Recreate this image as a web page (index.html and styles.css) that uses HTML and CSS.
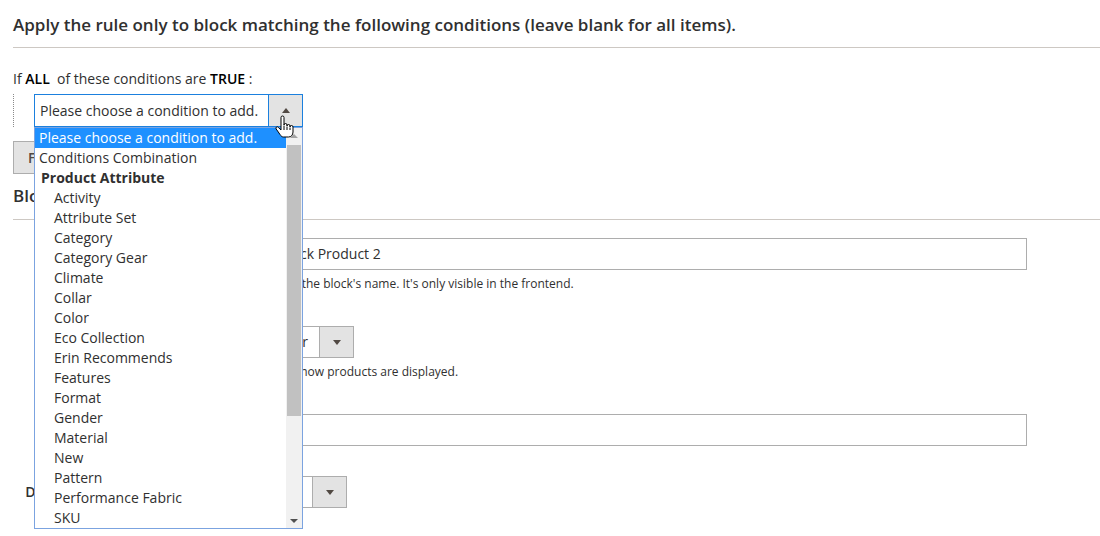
FILE: index.html
```html
<!DOCTYPE html>
<html lang="en">
<head>
<meta charset="utf-8">
<title>Conditions</title>
<link rel="stylesheet" href="styles.css">
</head>
<body>
<div class="page">
  <h3 class="section-title">Apply the rule only to block matching the following conditions (leave blank for all items).</h3>
  <p class="cond-head">If <b>ALL</b>&nbsp; of these conditions are <b>TRUE</b> :</p>
  <div class="rule-tree">
    <div class="fake-select">
      <span class="fs-value">Please choose a condition to add.</span>
      <span class="fs-btn"><span class="tri up"></span></span>
      <div class="listbox">
        <div class="opts">
          <div class="opt sel">Please choose a condition to add.</div>
          <div class="opt">Conditions Combination</div>
          <div class="grp">Product Attribute</div>
          <div class="opt sub">Activity</div>
          <div class="opt sub">Attribute Set</div>
          <div class="opt sub">Category</div>
          <div class="opt sub">Category Gear</div>
          <div class="opt sub">Climate</div>
          <div class="opt sub">Collar</div>
          <div class="opt sub">Color</div>
          <div class="opt sub">Eco Collection</div>
          <div class="opt sub">Erin Recommends</div>
          <div class="opt sub">Features</div>
          <div class="opt sub">Format</div>
          <div class="opt sub">Gender</div>
          <div class="opt sub">Material</div>
          <div class="opt sub">New</div>
          <div class="opt sub">Pattern</div>
          <div class="opt sub">Performance Fabric</div>
          <div class="opt sub">SKU</div>
        </div>
        <div class="sbar">
          <span class="arr arr-up"></span>
          <span class="track"><span class="thumb"></span></span>
          <span class="arr arr-down"></span>
        </div>
      </div>
      <svg class="cursor" viewBox="0 0 19 23" width="19" height="23" aria-hidden="true">
        <path d="M6 2.5a1.5 1.5 0 0 1 3 0V10a1.5 1.5 0 0 1 3 0v1a1.5 1.5 0 0 1 3 0v1a1.5 1.5 0 0 1 3 0v5c0 3-2 5-4.5 5H8.5c-1.5 0-2.5-1-3.5-2.5L1.2 14a1.3 1.3 0 0 1 2-1.7L6 15Z" fill="#fff" stroke="#000" stroke-width="1" stroke-linejoin="round"/>
        <path d="M9 10.5V15M12 11.5V15M15 12.5V15" stroke="#000" stroke-width="1" fill="none"/>
      </svg>
    </div>
  </div>
  <button class="btn" type="button">Find Products</button>
  <h3 class="section-title second">Block Settings</h3>
  <div class="fields">
    <div class="field">
      <label class="label">Block Name</label>
      <div class="control">
        <div class="input">Block Product 2</div>
        <div class="note">This is the block's name. It's only visible in the frontend.</div>
      </div>
    </div>
    <div class="field">
      <label class="label">Display Mode</label>
      <div class="control">
        <div class="select w90"><span class="sel-val">Slider</span><span class="sel-btn"><span class="tri down"></span></span></div>
        <div class="note">Select how products are displayed.</div>
      </div>
    </div>
    <div class="field">
      <label class="label">Block Title</label>
      <div class="control">
        <div class="input"></div>
      </div>
    </div>
    <div class="field">
      <label class="label">Display the Add to Cart Button</label>
      <div class="control">
        <div class="select w83"><span class="sel-val">Yes</span><span class="sel-btn"><span class="tri down"></span></span></div>
      </div>
    </div>
  </div>
</div>
</body>
</html>
```

FILE: styles.css
```css
html, body {
  margin: 0;
  padding: 0;
  background: #ffffff;
}

body {
  font-family: "Open Sans", "DejaVu Sans", sans-serif;
  color: #303030;
  overflow: hidden;
}

.page {
  padding-left: 13px;
}

.section-title {
  margin: 0;
  padding: 13px 0 10px;
  font-size: 17px;
  line-height: 24px;
  font-weight: 600;
  color: #303030;
  border-bottom: 1px solid #cdc8c3;
}

.section-title.second {
  padding: 10px 0 11px;
}

.cond-head {
  margin: 22px 0 0;
  font-size: 14px;
  line-height: 18px;
}

.cond-head b {
  font-weight: 600;
  color: #000;
}

.rule-tree {
  margin-top: 6px;
  padding-left: 20px;
  border-left: 1px dotted #8a8a8a;
}

.fake-select {
  position: relative;
  display: flex;
  width: 269px;
  height: 33px;
  box-sizing: border-box;
  border: 1px solid #1b80de;
  background: #fff;
}

.fs-value {
  flex: 1;
  padding-left: 5px;
  font-size: 14px;
  line-height: 31px;
  white-space: nowrap;
  color: #303030;
}

.fs-btn {
  width: 34px;
  box-sizing: border-box;
  border-left: 1px solid #1b80de;
  background: #e3e3e3;
  display: flex;
  align-items: center;
  justify-content: center;
}

.tri {
  width: 0;
  height: 0;
  border-left: 4px solid transparent;
  border-right: 4px solid transparent;
}

.tri.up {
  border-bottom: 5px solid #514943;
}

.tri.down {
  border-top: 5px solid #514943;
}

.listbox {
  position: absolute;
  left: -1px;
  top: calc(100% + 1px);
  width: 269px;
  box-sizing: border-box;
  border: 1px solid #7ba3e0;
  background: #fff;
  display: flex;
  z-index: 10;
}

.opts {
  flex: 1;
}

.opt {
  height: 20px;
  line-height: 20px;
  font-size: 14px;
  padding-left: 4px;
  white-space: nowrap;
  color: #303030;
}

.opt.sel {
  background: #1e90ff;
  color: #fff;
}

.opt.sub {
  padding-left: 19px;
}

.grp {
  height: 20px;
  line-height: 20px;
  font-size: 14px;
  font-weight: 700;
  padding-left: 6px;
  color: #303030;
}

.sbar {
  width: 16px;
  background: #f1f1f1;
  display: flex;
  flex-direction: column;
}

.arr {
  height: 15px;
  display: flex;
  align-items: center;
  justify-content: center;
}

.arr::before {
  content: "";
  width: 0;
  height: 0;
  border-left: 4px solid transparent;
  border-right: 4px solid transparent;
}

.arr-up::before {
  border-bottom: 4px solid #a3a3a3;
}

.arr-down::before {
  border-top: 4px solid #505050;
}

.track {
  flex: 1;
}

.thumb {
  display: block;
  height: 271px;
  margin: 2px 1px 0 1px;
  background: #c1c1c1;
}

.cursor {
  position: absolute;
  left: 240px;
  top: 20px;
  z-index: 20;
}

.btn {
  display: block;
  margin-top: 14px;
  height: 33px;
  padding: 0 14px;
  background: #e3e3e3;
  border: 1px solid #adadad;
  font-family: "Open Sans", sans-serif;
  font-size: 14px;
  font-weight: 600;
  line-height: 31px;
  color: #514943;
}

.fields {
  margin-top: 18px;
}

.field {
  display: grid;
  grid-template-columns: 251px 763px;
  margin-bottom: 30px;
}

.label {
  text-align: right;
  padding-right: 33px;
  font-size: 14px;
  font-weight: 600;
  line-height: 32px;
  white-space: nowrap;
  color: #303030;
}

.input {
  height: 32px;
  box-sizing: border-box;
  border: 1px solid #adadad;
  padding: 0 10px 0 14px;
  font-size: 14px;
  line-height: 30px;
  color: #303030;
}

.note {
  margin: 5px 0 3px;
  font-size: 12px;
  line-height: 18px;
  color: #303030;
}

.select {
  display: flex;
  height: 32px;
  box-sizing: border-box;
  border: 1px solid #adadad;
  background: #fff;
}

.select.w90 {
  width: 90px;
}

.select.w83 {
  width: 83px;
}

.sel-val {
  flex: 1;
  padding-left: 6px;
  font-size: 14px;
  line-height: 30px;
  white-space: nowrap;
  overflow: hidden;
}

.sel-btn {
  width: 34px;
  box-sizing: border-box;
  border-left: 1px solid #adadad;
  background: #e3e3e3;
  display: flex;
  align-items: center;
  justify-content: center;
}
```
